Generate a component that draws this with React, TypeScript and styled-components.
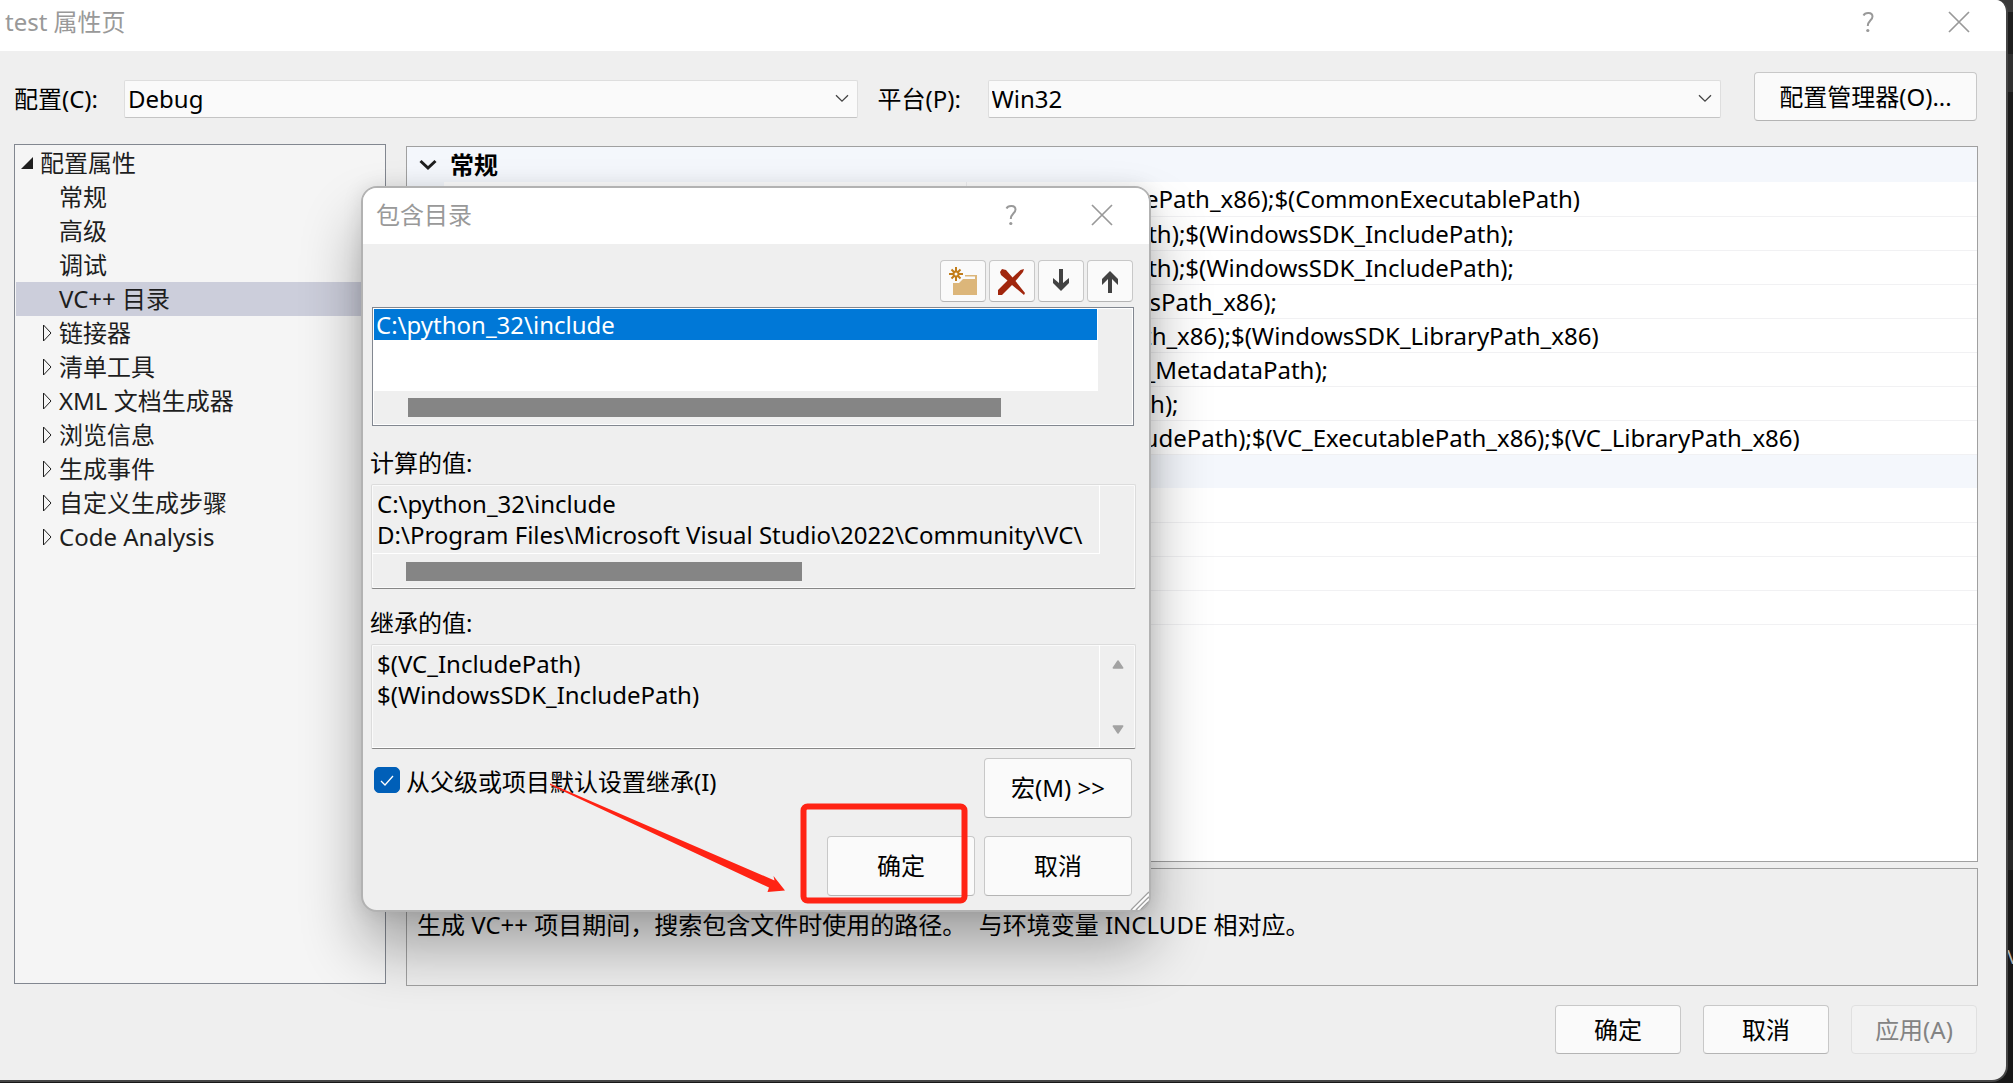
import React, { useState } from "react";
import styled, { createGlobalStyle } from "styled-components";

const fontStack = `"Noto Sans", "Noto Sans CJK SC", sans-serif`;

const GlobalStyle = createGlobalStyle`
  *, *::before, *::after { box-sizing: border-box; }
  body {
    margin: 0;
    background: #1b1b1b;
    color: #000;
    font-family: ${fontStack};
    font-size: 24px;
    line-height: 34px;
  }
  button, select, textarea { font: inherit; color: inherit; margin: 0; }
`;

/* ---------- desktop and main window ---------- */

const Desktop = styled.div`
  position: relative;
  min-height: 100vh;
  display: flex;
  overflow: hidden;
  padding: 0 5px 1px 0;
  background: linear-gradient(#3a3a3a 0 12px, #1f1f1f 12px 54px, #303030 54px 92px, #1b1b1b 92px 840px, #272727 840px 870px, #181818 870px);
`;

const BehindText = styled.span`
  position: absolute;
  right: -6px;
  top: 940px;
  font-size: 20px;
  color: #b8b8b8;
`;

const Window = styled.main`
  position: relative;
  flex: 1;
  display: flex;
  flex-direction: column;
  border: solid #454545;
  border-width: 0 2px 2px 0;
  border-radius: 0 12px 16px 0;
  background: #efefef;
  overflow: hidden;
`;

const TitleBar = styled.header<{ $height: number; $left: number; $right: number }>`
  display: flex;
  align-items: center;
  height: ${(p) => p.$height}px;
  padding: 0 ${(p) => p.$right}px 8px ${(p) => p.$left}px;
  background: #fff;
  color: #999;
`;

const Title = styled.h1`
  flex: 1;
  margin: 0;
  font-size: 24px;
  font-weight: 400;
`;

const TitleButton = styled.button`
  display: flex;
  align-items: center;
  justify-content: center;
  width: 90px;
  height: 40px;
  padding: 0;
  border: 0;
  background: none;
  color: #999;
`;

const WindowBody = styled.div`
  flex: 1;
  display: flex;
  flex-direction: column;
  padding: 21px 28px 26px 14px;
`;

const ConfigBar = styled.div`
  display: grid;
  grid-template-columns: 110px 1fr 130px 1fr 257px;
  align-items: center;
`;

const ConfigLabel = styled.label<{ $inset?: boolean }>`
  padding: 4px 0 0 ${(p) => (p.$inset ? 20 : 0)}px;
`;

const SelectWrap = styled.div`
  display: grid;
  align-items: center;
  margin-top: 4px;
  & > * { grid-area: 1 / 1; }
  & > svg { justify-self: end; margin-right: 9px; pointer-events: none; }
`;

const Select = styled.select`
  width: 100%;
  height: 38px;
  padding: 0 36px 0 3px;
  border: 1px solid #dedede;
  border-bottom-color: #c4c4c4;
  border-radius: 2px;
  background: #fafafa;
  appearance: none;
`;

const Button = styled.button<{ $width: number; $height: number }>`
  width: ${(p) => p.$width}px;
  height: ${(p) => p.$height}px;
  padding: 0;
  border: 1px solid #c8c8c8;
  border-bottom-color: #b4b4b4;
  border-radius: 4px;
  background: #fafafa;
  & > svg { display: block; margin: 0 auto; }
  &:disabled { background: #f2f2f2; border-color: #e0e0e0; color: #838383; }
`;

const ConfigButtonSlot = styled.div`
  display: flex;
  justify-content: flex-end;
  padding-right: 1px;
`;

const Panels = styled.div`
  flex: 1;
  display: grid;
  grid-template-columns: 372px 1fr;
  column-gap: 20px;
  margin-top: 23px;
`;

/* ---------- tree ---------- */

const Tree = styled.ul`
  margin: 0 0 2px;
  padding: 1px;
  list-style: none;
  border: 1px solid #828790;
  background: #f5f5f5;
  color: #1e1e1e;
`;

const TreeItem = styled.li<{ $level: number; $selected?: boolean }>`
  display: flex;
  align-items: center;
  height: 34px;
  padding-left: ${(p) => (p.$level ? 24 : 5)}px;
  background: ${(p) => (p.$selected ? "#cccedb" : "transparent")};
`;

const TreeMark = styled.span`
  display: flex;
  width: 19px;
`;

/* ---------- property grid ---------- */

const RightColumn = styled.div`
  display: flex;
  flex-direction: column;
  gap: 6px;
  padding-top: 2px;
`;

const GridFrame = styled.div`
  flex: 1;
  border: 1px solid #a0a0a0;
  background: #fff;
`;

const Grid = styled.table`
  width: 100%;
  table-layout: fixed;
  border-collapse: collapse;
  & td, & th { height: 34px; padding: 0; }
`;

const CategoryCell = styled.th`
  background: #f4f7fc;
  text-align: left;
  font-weight: 700;
`;

const CategoryInner = styled.div`
  display: flex;
  align-items: center;
  gap: 13px;
  height: 35px;
  padding-left: 12px;
`;

const GutterCell = styled.td`
  background: #f4f7fc;
`;

const NameCell = styled.td`
  border-bottom: 1px solid #f1f1f3;
  border-right: 1px solid #f1f1f3;
`;

const ValueCell = styled.td`
  border-bottom: 1px solid #f1f1f3;
  line-height: 33px;
  white-space: nowrap;
`;

const ValueText = styled.span`
  padding-left: 9px;
`;

const Description = styled.section`
  height: 118px;
  padding: 39px 10px 0;
  border: 1px solid #a0a0a0;
  white-space: pre-wrap;
`;

const Footer = styled.footer`
  display: flex;
  justify-content: flex-end;
  gap: 22px;
  margin-top: 19px;
  padding-right: 1px;
`;

/* ---------- dialog ---------- */

const Dialog = styled.section`
  position: absolute;
  left: 361px;
  top: 186px;
  width: 790px;
  border: 2px solid #b2b2b2;
  border-radius: 16px;
  background: #efefef;
  background-clip: padding-box;
  box-shadow: 0 36px 60px rgba(0, 0, 0, 0.32), 0 0 20px rgba(0, 0, 0, 0.1);
`;

const DialogTitleBar = styled(TitleBar)`
  padding-bottom: 3px;
  border-radius: 14px 14px 0 0;
`;

const DialogBody = styled.div`
  padding: 16px 13px 14px 7px;
`;

const Toolbar = styled.div`
  display: flex;
  justify-content: flex-end;
  gap: 3px;
  padding-right: 3px;
`;

const ListFrame = styled.div`
  display: grid;
  grid-template: 82px 33px / 1fr 34px;
  margin: 5px 2px 19px;
  padding: 1px;
  border: 1px solid #828790;
  background: #efefef;
  outline: 1px solid #fff;
  outline-offset: -2px;
`;

const List = styled.ul`
  margin: 0;
  padding: 0;
  list-style: none;
  background: #fff;
`;

const ListItem = styled.li`
  margin-right: 1px;
  padding-left: 2px;
  background: #0078d7;
  color: #fff;
  line-height: 31px;
`;

const FieldLabel = styled.label`
  display: block;
  padding-bottom: 3px;
  line-height: 36px;
`;

const ValueFrame = styled.div<{ $bar?: boolean }>`
  display: grid;
  grid-template: ${(p) => (p.$bar ? "69px 34px" : "103px")} / 1fr 35px;
  margin-left: 1px;
  border: 1px solid #dcdcdc;
  border-bottom-color: #868686;
  border-radius: 2px;
  box-shadow: inset 0 0 0 1px #fafafa;
  & + label { margin-top: 16px; }
`;

const TextPane = styled.div`
  display: flex;
  padding: 3px 8px 0 5px;
  border-right: 1px solid #fff;
  border-bottom: 1px solid #fff;
`;

const ValueArea = styled.textarea`
  flex: 1;
  min-width: 0;
  padding: 0;
  border: 0;
  outline: 0;
  resize: none;
  overflow: hidden;
  white-space: pre;
  background: none;
  line-height: 31px;
`;

const BarTrack = styled.div`
  display: flex;
  align-items: center;
  padding-left: 34px;
`;

const BarThumb = styled.div<{ $share: number }>`
  width: ${(p) => p.$share}%;
  height: 19px;
  background: #858585;
`;

const ArrowColumn = styled.div`
  display: flex;
  flex-direction: column;
  justify-content: space-between;
  align-items: center;
  padding: 14px 0 13px;
`;

const DialogActions = styled.div`
  display: grid;
  grid-template-columns: 1fr 148px 148px;
  gap: 18px 9px;
  margin-top: 9px;
  padding-right: 4px;
`;

const InheritLabel = styled.label`
  grid-column: 1 / 3;
  display: flex;
  align-items: flex-start;
  gap: 6px;
  padding: 7px 0 0 4px;
`;

const Checkbox = styled.input`
  appearance: none;
  width: 26px;
  height: 26px;
  margin: 2px 0 0;
  border: 1px solid #005fb8;
  border-radius: 5px;
  background: #fff;
  &:checked {
    background: #005fb8
      url("data:image/svg+xml,%3Csvg xmlns='http://www.w3.org/2000/svg' viewBox='0 0 24 24'%3E%3Cpath d='M6 13l4 4 8-9' fill='none' stroke='white' stroke-width='1.3'/%3E%3C/svg%3E")
      center / 24px no-repeat;
  }
`;

const OkCell = styled.div`
  grid-column: 2;
`;

const Grip = styled.svg`
  position: absolute;
  right: 0;
  bottom: 0;
`;

const Annotation = styled.svg`
  position: absolute;
  left: 180px;
  top: 588px;
  pointer-events: none;
`;

/* ---------- icons ---------- */

const HelpIcon = () => (
  <svg width="14" height="22" viewBox="0 0 14 22" fill="none" stroke="#999" strokeWidth="2">
    <path d="M1.500 4.500C3 1 10.500 .8 10.500 5.500C10.500 9.200 5.800 9.500 5.800 15" />
    <circle cx="5.800" cy="19.500" r="1.600" fill="#999" stroke="none" />
  </svg>
);

const CloseIcon = () => (
  <svg width="22" height="22" viewBox="0 0 22 22" stroke="#999" strokeWidth="1.700">
    <path d="M1 1L21 21M21 1L1 21" />
  </svg>
);

const SelectChevron = () => (
  <svg width="14" height="9" viewBox="0 0 14 9" fill="none" stroke="#444" strokeWidth="1.300">
    <path d="M1 1.200L7 7.200L13 1.200" />
  </svg>
);

const CategoryChevron = () => (
  <svg width="18" height="12" viewBox="0 0 18 12" fill="none" stroke="#1e1e1e" strokeWidth="3">
    <path d="M1.500 2L9 9L16.500 2" />
  </svg>
);

const ExpandedMark = () => (
  <svg width="12" height="12" viewBox="0 0 12 12">
    <path d="M12 0V12H0Z" fill="#1e1e1e" />
  </svg>
);

const CollapsedMark = () => (
  <svg width="12" height="18" viewBox="0 0 12 18" fill="none" stroke="#1e1e1e">
    <path d="M3.500 1V17L11 9Z" />
  </svg>
);

const NewFolderIcon = () => (
  <svg width="28" height="28" viewBox="0 0 28 28">
    <path d="M16 8H28V28H4V16H10L14 12H16Z" fill="#dcb67a" />
    <path d="M16 9.500H26V12H15Z" fill="#fafafa" />
    <g stroke="#c27d1a" strokeWidth="2" fill="none">
      <path d="M7 0V4.500M7 9.500V14M0 7H4.500M9.500 7H14M2.500 2.500L5 5M11.500 2.500L9 5M2.500 11.500L5 9M11.500 11.500L9 9" />
      <circle cx="7" cy="7" r="2.500" />
    </g>
  </svg>
);

const DeleteIcon = () => (
  <svg width="28" height="28" viewBox="0 0 28 28" fill="#a1260d">
    <path d="M2 5L4 2L8 3L14.500 10.500L22.500 3L26 2L25 5L17.500 14L27 26L26 28L14 18L6 26L4 28H0V23L9.500 13.500L3 8Z" />
  </svg>
);

const ArrowIcon = ({ up }: { up?: boolean }) => (
  <svg width="28" height="28" viewBox="0 0 28 28">
    <path
      d={up ? "M12 26V12L6 18V12L14 4L22 12V18L16 12V26Z" : "M12 2V16L6 11V16L14 24L22 16V11L16 16V2Z"}
      fill="#424242"
    />
  </svg>
);

const ScrollArrow = ({ down }: { down?: boolean }) => (
  <svg width="12" height="10" viewBox="0 0 12 10" fill="#a3a3a3" stroke="#a3a3a3" strokeWidth="1.500" strokeLinejoin="round">
    <path d={down ? "M1.300 1H10.700L6 8Z" : "M1.300 9H10.700L6 2Z"} />
  </svg>
);

/* ---------- data ---------- */

const treeItems = [
  { text: "常规" },
  { text: "高级" },
  { text: "调试" },
  { text: "VC++ 目录", selected: true },
  { text: "链接器", parent: true },
  { text: "清单工具", parent: true },
  { text: "XML 文档生成器", parent: true },
  { text: "浏览信息", parent: true },
  { text: "生成事件", parent: true },
  { text: "自定义生成步骤", parent: true },
  { text: "Code Analysis", parent: true },
];

const generalValues = [
  "$(VC_ExecutablePath_x86);$(CommonExecutablePath)",
  "$(VC_IncludePath);$(WindowsSDK_IncludePath);",
  "$(VC_IncludePath);$(WindowsSDK_IncludePath);",
  "$(VC_ReferencesPath_x86);",
  "$(VC_LibraryPath_x86);$(WindowsSDK_LibraryPath_x86)",
  "$(WindowsSDK_MetadataPath);",
  "$(VC_SourcePath);",
  "$(CommonExcludePath);$(VC_ExecutablePath_x86);$(VC_LibraryPath_x86)",
];

const publicValues = ["", "", "", ""];

const ValueRow = ({ value }: { value: string }) => (
  <tr>
    <GutterCell />
    <NameCell />
    <ValueCell>
      <ValueText>{value}</ValueText>
    </ValueCell>
  </tr>
);

const TitleControls = () => (
  <>
    <TitleButton type="button" aria-label="帮助">
      <HelpIcon />
    </TitleButton>
    <TitleButton type="button" aria-label="关闭">
      <CloseIcon />
    </TitleButton>
  </>
);

const IncludeDialog = () => {
  const [inherit, setInherit] = useState(true);
  return (
    <Dialog role="dialog" aria-labelledby="dialog-title">
      <DialogTitleBar $height={56} $left={13} $right={2}>
        <Title as="h2" id="dialog-title">包含目录</Title>
        <TitleControls />
      </DialogTitleBar>
      <DialogBody>
        <Toolbar>
          <Button type="button" $width={46} $height={42} aria-label="新行"><NewFolderIcon /></Button>
          <Button type="button" $width={46} $height={42} aria-label="删除"><DeleteIcon /></Button>
          <Button type="button" $width={46} $height={42} aria-label="下移"><ArrowIcon /></Button>
          <Button type="button" $width={46} $height={42} aria-label="上移"><ArrowIcon up /></Button>
        </Toolbar>
        <ListFrame>
          <List role="listbox">
            <ListItem role="option" aria-selected>C:\python_32\include</ListItem>
          </List>
          <span />
          <BarTrack>
            <BarThumb $share={86} />
          </BarTrack>
        </ListFrame>

        <FieldLabel htmlFor="evaluated">计算的值:</FieldLabel>
        <ValueFrame $bar>
          <TextPane>
            <ValueArea
              id="evaluated"
              readOnly
              value={"C:\\python_32\\include\nD:\\Program Files\\Microsoft Visual Studio\\2022\\Community\\VC\\"}
            />
          </TextPane>
          <span />
          <BarTrack>
            <BarThumb $share={57} />
          </BarTrack>
        </ValueFrame>

        <FieldLabel htmlFor="inherited">继承的值:</FieldLabel>
        <ValueFrame>
          <TextPane>
            <ValueArea id="inherited" readOnly value={"$(VC_IncludePath)\n$(WindowsSDK_IncludePath)"} />
          </TextPane>
          <ArrowColumn>
            <ScrollArrow />
            <ScrollArrow down />
          </ArrowColumn>
        </ValueFrame>

        <DialogActions>
          <InheritLabel>
            <Checkbox type="checkbox" checked={inherit} onChange={(e) => setInherit(e.target.checked)} />
            从父级或项目默认设置继承(I)
          </InheritLabel>
          <Button type="button" $width={148} $height={60}>宏(M) &gt;&gt;</Button>
          <OkCell>
            <Button type="button" $width={148} $height={60}>确定</Button>
          </OkCell>
          <Button type="button" $width={148} $height={60}>取消</Button>
        </DialogActions>
      </DialogBody>
      <Grip width="20" height="20" viewBox="0 0 20 20" stroke="#a0a0a0" strokeWidth="1.500">
        <path d="M2 20L20 2M7 20L20 7M12 19L19 12" />
        <path d="M4 20L20 4M9 20L20 9" stroke="#fff" />
      </Grip>
      <Annotation width="430" height="135" viewBox="543 776 430 135">
        <path d="M550 783.500L774.500 880.500L773.500 876L785 890.500L767.500 892L769 887.500L550 785Z" fill="#ff2314" />
        <rect x="803.500" y="806.500" width="161" height="94" rx="4" fill="none" stroke="#ff2314" strokeWidth="6" />
      </Annotation>
    </Dialog>
  );
};

export default function App() {
  const [configuration, setConfiguration] = useState("Debug");
  const [platform, setPlatform] = useState("Win32");
  return (
    <Desktop>
      <GlobalStyle />
      <BehindText>V</BehindText>
      <Window>
        <TitleBar $height={51} $left={5} $right={2}>
          <Title>test 属性页</Title>
          <TitleControls />
        </TitleBar>
        <WindowBody>
          <ConfigBar>
            <ConfigLabel htmlFor="configuration">配置(C):</ConfigLabel>
            <SelectWrap>
              <Select id="configuration" value={configuration} onChange={(e) => setConfiguration(e.target.value)}>
                <option>Debug</option>
                <option>Release</option>
              </Select>
              <SelectChevron />
            </SelectWrap>
            <ConfigLabel htmlFor="platform" $inset>平台(P):</ConfigLabel>
            <SelectWrap>
              <Select id="platform" value={platform} onChange={(e) => setPlatform(e.target.value)}>
                <option>Win32</option>
                <option>x64</option>
              </Select>
              <SelectChevron />
            </SelectWrap>
            <ConfigButtonSlot>
              <Button type="button" $width={223} $height={49}>配置管理器(O)...</Button>
            </ConfigButtonSlot>
          </ConfigBar>

          <Panels>
            <Tree role="tree">
              <TreeItem role="treeitem" aria-expanded $level={0}>
                <TreeMark><ExpandedMark /></TreeMark>
                配置属性
              </TreeItem>
              {treeItems.map((item) => (
                <TreeItem role="treeitem" key={item.text} $level={1} $selected={item.selected}>
                  <TreeMark>{item.parent && <CollapsedMark />}</TreeMark>
                  {item.text}
                </TreeItem>
              ))}
            </Tree>

            <RightColumn>
              <GridFrame>
                <Grid>
                  <colgroup>
                    <col style={{ width: 37 }} />
                    <col style={{ width: 522 }} />
                    <col />
                  </colgroup>
                  <tbody>
                    <tr>
                      <CategoryCell colSpan={3}>
                        <CategoryInner>
                          <CategoryChevron />
                          常规
                        </CategoryInner>
                      </CategoryCell>
                    </tr>
                    {generalValues.map((value, i) => (
                      <ValueRow key={i} value={value} />
                    ))}
                    <tr>
                      <CategoryCell colSpan={3} />
                    </tr>
                    {publicValues.map((value, i) => (
                      <ValueRow key={i} value={value} />
                    ))}
                  </tbody>
                </Grid>
              </GridFrame>
              <Description>{"生成 VC++ 项目期间，搜索包含文件时使用的路径。  与环境变量 INCLUDE 相对应。"}</Description>
            </RightColumn>
          </Panels>

          <Footer>
            <Button type="button" $width={126} $height={49}>确定</Button>
            <Button type="button" $width={126} $height={49}>取消</Button>
            <Button type="button" $width={126} $height={49} disabled>应用(A)</Button>
          </Footer>
        </WindowBody>
        <IncludeDialog />
      </Window>
    </Desktop>
  );
}
